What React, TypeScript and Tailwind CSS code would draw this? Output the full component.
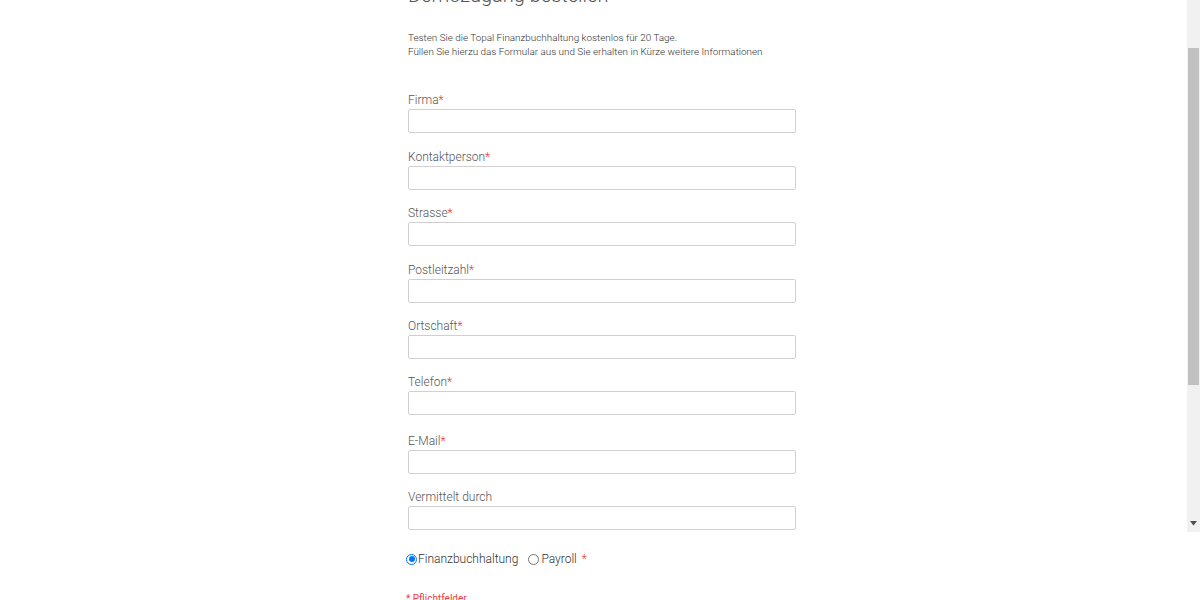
const fields = [
  { label: "Firma", required: true, mt: "mt-0" },
  { label: "Kontaktperson", required: true, mt: "mt-[16px]" },
  { label: "Strasse", required: true, mt: "mt-[15px]" },
  { label: "Postleitzahl", required: true, mt: "mt-[16px]" },
  { label: "Ortschaft", required: true, mt: "mt-[15px]" },
  { label: "Telefon", required: true, mt: "mt-[15px]" },
  { label: "E-Mail", required: true, mt: "mt-[18px]" },
  { label: "Vermittelt durch", required: false, mt: "mt-[15px]" },
];

function Radio({ checked }: { checked: boolean }) {
  return checked ? (
    <span className="flex h-[11px] w-[11px] shrink-0 items-center justify-center rounded-full border-[1.5px] border-[#0075ff] bg-white">
      <span className="h-[6px] w-[6px] rounded-full bg-[#0075ff]" />
    </span>
  ) : (
    <span className="block h-[11px] w-[11px] shrink-0 rounded-full border border-[#767676] bg-white" />
  );
}

export default function App() {
  return (
    <div className="relative h-[600px] overflow-hidden bg-white font-['Roboto','Liberation_Sans',sans-serif]">
      <div className="ml-[408px] w-[388px]">
        {/* Header */}
        <h1 className="mt-[-17px] text-[20px] font-light leading-[24px] text-[#555]">
          Demozugang bestellen
        </h1>
        <p className="mt-[24px] text-[9.9px] font-light leading-[14px] text-[#333]">
          Testen Sie die Topal Finanzbuchhaltung kostenlos für 20 Tage.
          <br />
          Füllen Sie hierzu das Formular aus und Sie erhalten in Kürze weitere Informationen
        </p>

        {/* Form */}
        <form className="mt-[33px]">
          {fields.map((f) => (
            <div key={f.label} className={f.mt}>
              <label className="block h-[16px] text-[12px] font-light leading-[16px] text-[#555]">
                {f.label}
                {f.required && <span className="text-[#e8383d]">*</span>}
              </label>
              <input
                type="text"
                className="mt-[1px] block h-[24px] w-[388px] rounded-[2px] border border-[#d0d0d0] bg-white px-2 text-[13px] outline-none"
              />
            </div>
          ))}

          <div className="-ml-[2px] mt-[21px] flex h-[16px] items-center text-[12px] font-light leading-[16px] text-[#333]">
            <Radio checked />
            <span className="ml-[1px]">Finanzbuchhaltung</span>
            <span className="ml-[10px]">
              <Radio checked={false} />
            </span>
            <span className="ml-[2px]">Payroll</span>
            <span className="ml-[5px] text-[#e8383d]">*</span>
          </div>

          <p className="-ml-[2px] mt-[26px] text-[10px] leading-[12px] text-[#f03c3c]">
            * Pflichtfelder
          </p>
        </form>
      </div>

      {/* Scrollbar */}
      <div className="absolute right-0 top-0 h-[532px] w-[13px] bg-[#f1f1f1]">
        <div className="absolute left-[1px] right-[1px] top-[48px] h-[337px] bg-[#c1c1c1]" />
        <svg className="absolute left-[3px] top-[521px]" width="7" height="5" viewBox="0 0 7 5">
          <path d="M0 0h7L3.5 4.5z" fill="#505050" />
        </svg>
      </div>
    </div>
  );
}
